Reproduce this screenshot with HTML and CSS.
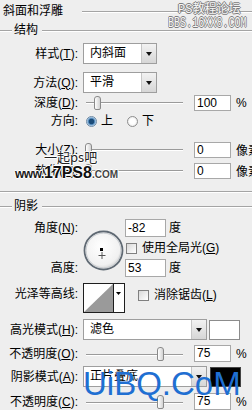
FILE: index.html
```html
<!DOCTYPE html>
<html lang="zh-CN">
<head>
  <meta charset="UTF-8">
  <title>斜面和浮雕</title>
  <link rel="stylesheet" href="styles.css">
</head>
<body>
  <div class="panel">
    <div class="title-row">
      <span class="title">斜面和浮雕</span>
      <span class="rule"></span>
    </div>

    <div class="group-head">
      <span class="rule stub"></span>
      <span class="group-name">结构</span>
      <span class="rule"></span>
    </div>

    <div class="row sel-row first">
      <label class="lbl">样式(<u>T</u>):</label>
      <div class="select narrow"><span>内斜面</span><i class="btn"></i></div>
    </div>
    <div class="row sel-row gap8">
      <label class="lbl">方法(<u>Q</u>):</label>
      <div class="select narrow"><span>平滑</span><i class="btn"></i></div>
    </div>
    <div class="row slide-row gap2">
      <label class="lbl">深度(<u>D</u>):</label>
      <div class="ctrl">
        <div class="slider"><i class="thumb" style="left: 8px"></i></div>
        <div class="num">100</div>
        <span class="unit">%</span>
      </div>
    </div>
    <div class="row slide-row gap2">
      <label class="lbl">方向:</label>
      <div class="ctrl">
        <span class="radio on"><i></i>上</span>
        <span class="radio second"><i></i>下</span>
      </div>
    </div>
    <div class="row slide-row gap12">
      <label class="lbl">大小(<u>Z</u>):</label>
      <div class="ctrl">
        <div class="slider"><i class="thumb" style="left: -1px"></i></div>
        <div class="num">0</div>
        <span class="unit">像素</span>
      </div>
    </div>
    <div class="row slide-row gap5">
      <label class="lbl">软化(<u>F</u>):</label>
      <div class="ctrl">
        <div class="slider"><i class="thumb" style="left: -1px"></i></div>
        <div class="num">0</div>
        <span class="unit">像素</span>
      </div>
    </div>

    <div class="divider"></div>

    <div class="group-head shadow-head">
      <span class="rule stub"></span>
      <span class="group-name">阴影</span>
      <span class="rule"></span>
    </div>

    <div class="angle">
      <label class="lbl r1">角度(<u>N</u>):</label>
      <svg class="dial" width="42" height="42" viewBox="0 0 42 42">
        <defs>
          <radialGradient id="dialFill" cx="45%" cy="40%" r="60%">
            <stop offset="0" stop-color="#ffffff"/>
            <stop offset="0.8" stop-color="#f1f1f1"/>
            <stop offset="1" stop-color="#d4d4d4"/>
          </radialGradient>
        </defs>
        <circle cx="20.5" cy="20.5" r="19" fill="url(#dialFill)" stroke="#5f6973" stroke-width="1.8"/>
        <circle cx="20.5" cy="20.5" r="17.4" fill="none" stroke="#c9cdd1" stroke-width="1"/>
        <rect x="17" y="18" width="3" height="3" fill="#000"/>
        <path d="M15.5 25.5h7M19 22v7" stroke="#fff" stroke-width="2.2"/>
        <path d="M15.5 25.5h7M19 22v7" stroke="#555" stroke-width="1"/>
      </svg>
      <div class="ctrl r1 c3">
        <div class="num tall wide">-82</div>
        <span class="deg">度</span>
      </div>
      <label class="check r2 c3"><i></i><span>使用全局光(<u>G</u>)</span></label>
      <label class="lbl r3">高度:</label>
      <div class="ctrl r3 c3">
        <div class="num tall wide">53</div>
        <span class="deg">度</span>
      </div>
    </div>

    <div class="row contour-row">
      <label class="lbl">光泽等高线:</label>
      <div class="ctrl top">
        <svg class="contour" width="42" height="30" viewBox="0 0 42 30">
          <rect x="0.5" y="0.5" width="41" height="29" fill="#fff" stroke="#1e1e1e"/>
          <polygon points="1,29 30,1 30,29" fill="#9a9a9a"/>
          <line x1="30.5" y1="0.5" x2="30.5" y2="29.5" stroke="#1e1e1e"/>
          <polygon points="33,9 38,9 35.5,12" fill="#000"/>
        </svg>
        <label class="check aa"><i></i><span>消除锯齿(<u>L</u>)</span></label>
      </div>
    </div>

    <div class="row sel-row gap6">
      <label class="lbl">高光模式(<u>H</u>):</label>
      <div class="ctrl">
        <div class="select wide"><span>滤色</span><i class="btn"></i></div>
        <span class="swatch white"></span>
      </div>
    </div>
    <div class="row opa-row gap5">
      <label class="lbl">不透明度(<u>O</u>):</label>
      <div class="ctrl">
        <div class="slider"><i class="thumb" style="left: 71px"></i></div>
        <div class="num">75</div>
        <span class="unit">%</span>
      </div>
    </div>
    <div class="row sel-row gap4">
      <label class="lbl">阴影模式(<u>A</u>):</label>
      <div class="ctrl">
        <div class="select wide"><span>正片叠底</span><i class="btn"></i></div>
        <span class="swatch black"></span>
      </div>
    </div>
    <div class="row opa-row gap6">
      <label class="lbl">不透明度(<u>C</u>):</label>
      <div class="ctrl">
        <div class="slider"><i class="thumb" style="left: 71px"></i></div>
        <div class="num">75</div>
        <span class="unit">%</span>
      </div>
    </div>

    <!-- watermarks stamped over the screenshot -->
    <div class="wm-bbs">
      <span class="wm-bbs-name">PS教程论坛</span>
      <span class="wm-bbs-url">BBS.16XX8.COM</span>
    </div>
    <div class="wm-17">
      <span class="wm-17-name">一起ps吧</span>
      <span class="wm-17-url"><b class="www">www.</b><b class="big">17PS8</b><b class="com">.COM</b></span>
    </div>
    <div class="wm-uibq">UiBQ.CoM</div>
  </div>
</body>
</html>
```

FILE: styles.css
```css
* {
  box-sizing: border-box;
}
body {
  margin: 0;
  background: #eeeeee;
  font-family: "Liberation Sans", "Noto Sans CJK SC", sans-serif;
  font-size: 12px;
  color: #000;
}
.panel {
  position: relative;
  width: 252px;
  height: 410px;
  overflow: hidden;
}
u {
  text-decoration: underline;
  text-underline-offset: 1px;
}

/* section headings */
.title-row {
  display: flex;
  align-items: center;
  height: 22px;
  padding-left: 3px;
}
.title {
  line-height: 14px;
}
.title-row .rule {
  margin-left: 19px;
  margin-top: 2px;
}
.rule {
  flex: 1;
  height: 2px;
  border-top: 1px solid #a4a4a4;
  border-bottom: 1px solid #ffffff;
}
.group-head {
  display: flex;
  align-items: center;
  height: 16px;
}
.group-head .rule {
  margin-top: 2px;
}
.rule.stub {
  flex: none;
  width: 12px;
}
.group-name {
  margin: 0 4px 0 2px;
  line-height: 14px;
}
.shadow-head {
  margin-top: 5px;
}
.divider {
  margin-top: 13px;
  height: 2px;
  border-top: 1px solid #a4a4a4;
  border-bottom: 1px solid #ffffff;
}

/* rows */
.row {
  display: grid;
  grid-template-columns: 78px 1fr;
  column-gap: 5px;
  align-items: center;
}
.lbl {
  text-align: right;
  white-space: nowrap;
  line-height: 14px;
}
.first { margin-top: 5px; }
.gap2 { margin-top: 2px; }
.gap4 { margin-top: 4px; }
.gap5 { margin-top: 5px; }
.gap6 { margin-top: 6px; }
.gap8 { margin-top: 8px; }
.gap12 { margin-top: 12px; }
.sel-row { height: 21px; }
.slide-row { height: 16px; }
.opa-row { height: 17px; }
.ctrl {
  display: flex;
  align-items: center;
  white-space: nowrap;
}

/* dropdowns */
.select {
  display: flex;
  height: 21px;
  background: #fff;
  border: 1px solid #9e9e9e;
}
.select.narrow { width: 74px; }
.select.wide { width: 124px; }
.select span {
  flex: 1;
  padding-left: 6px;
  line-height: 19px;
}
.btn {
  display: flex;
  align-items: center;
  justify-content: center;
  width: 15px;
  border-left: 1px solid #c6c6c6;
  background: linear-gradient(#f2f2f2, #d6d6d6);
}
.btn::after {
  content: "";
  border-left: 3px solid transparent;
  border-right: 3px solid transparent;
  border-top: 4px solid #111;
}
.swatch {
  width: 31px;
  height: 20px;
  margin-left: 2px;
  border: 1px solid #8c8c8c;
}
.swatch.white { background: #fff; }
.swatch.black { background: #000; margin-left: 3px; border-color: #444; }

/* sliders and fields */
.slider {
  position: relative;
  width: 97px;
  height: 16px;
  margin-left: 3px;
  background: linear-gradient(#9a9a9a 50%, #fff 50%) 0 7px / 100% 2px no-repeat;
}
.opa-row .slider {
  background-position: 0 8px;
}
.thumb {
  position: absolute;
  top: 1px;
  width: 7px;
  height: 14px;
  border: 1px solid #8a8a8a;
  border-radius: 3px 3px 2px 2px;
  background: linear-gradient(90deg, #ffffff, #d2d2d2);
}
.num {
  width: 37px;
  height: 16px;
  margin-left: 11px;
  padding-left: 2px;
  background: #fff;
  border: 1px solid #a8a8a8;
  line-height: 14px;
}
.opa-row .num { height: 17px; line-height: 15px; }
.num.tall { height: 18px; line-height: 16px; margin-left: 0; }
.num.wide { width: 41px; }
.unit { margin-left: 5px; }
.deg { margin-left: 3px; line-height: 14px; }

/* radio + checkbox */
.radio {
  display: inline-flex;
  align-items: center;
  gap: 4px;
  margin-left: 3px;
  line-height: 14px;
}
.radio.second { margin-left: 14px; }
.radio i {
  width: 11px;
  height: 11px;
  border-radius: 50%;
  border: 1px solid #8e8e8e;
  background: radial-gradient(circle, #ffffff 40%, #dcdcdc);
}
.radio.on i {
  border-color: #6e8aa5;
  background: radial-gradient(circle, #1b4b78 0 2.4px, #4c85b8 3px, #bcd5eb 4.5px);
}
.check {
  display: inline-flex;
  align-items: center;
  gap: 5px;
  line-height: 14px;
  white-space: nowrap;
}
.check i {
  width: 11px;
  height: 11px;
  border: 1px solid #808080;
  background: linear-gradient(135deg, #d8d8d8, #ffffff);
}

/* angle dial block */
.angle {
  display: grid;
  grid-template-columns: 83px 42px 1fr;
  grid-template-rows: 18px 22px 18px;
  align-items: center;
  margin-top: 5px;
}
.angle .lbl { padding-right: 5px; }
.r1 { grid-row: 1; }
.r2 { grid-row: 2; }
.r3 { grid-row: 3; }
.c3 { grid-column: 3; }
.angle .check { margin-left: 1px; }
.dial {
  grid-column: 2;
  grid-row: 1 / 4;
  align-self: start;
  margin-top: 11px;
}

/* gloss contour */
.contour-row {
  margin-top: 6px;
  height: 30px;
  align-items: start;
}
.contour-row .lbl { margin-top: 4px; }
.ctrl.top { align-items: flex-start; }
.check.aa {
  margin-left: 13px;
  margin-top: 5px;
}

/* watermarks */
.wm-bbs {
  position: absolute;
  left: 168px;
  top: 3px;
  display: flex;
  flex-direction: column;
  color: #f6f6f6;
  text-shadow: 1px 0 #7c7c7c, -1px 0 #7c7c7c, 0 1px #7c7c7c, 0 -1px #7c7c7c;
}
.wm-bbs-name {
  margin-left: 10px;
  font: 12px/14px "Liberation Mono", "Noto Sans CJK SC", monospace;
}
.wm-bbs-url {
  font: 14px/12px "Liberation Mono", monospace;
  transform: scaleX(0.72);
  transform-origin: left;
  white-space: nowrap;
}
.wm-17 {
  position: absolute;
  left: 15px;
  top: 148px;
  display: flex;
  flex-direction: column;
  text-shadow: 1px 0 #fff, -1px 0 #fff, 0 1px #fff, 0 -1px #fff;
}
.wm-17-name {
  margin-left: 29px;
  color: #222;
  font: 13px/17px "Noto Sans CJK SC", sans-serif;
}
.wm-17-url {
  display: flex;
  align-items: baseline;
  line-height: 16px;
  white-space: nowrap;
}
.www {
  font-size: 12px;
  color: #1a1a1a;
  letter-spacing: -0.5px;
}
.big {
  font-size: 16px;
  color: #111;
}
.com {
  font-size: 10px;
  color: #444;
}
.wm-uibq {
  position: absolute;
  left: 83px;
  top: 367px;
  font: 33px/33px "Liberation Sans", sans-serif;
  color: #1f6fd2;
  white-space: nowrap;
}
```
